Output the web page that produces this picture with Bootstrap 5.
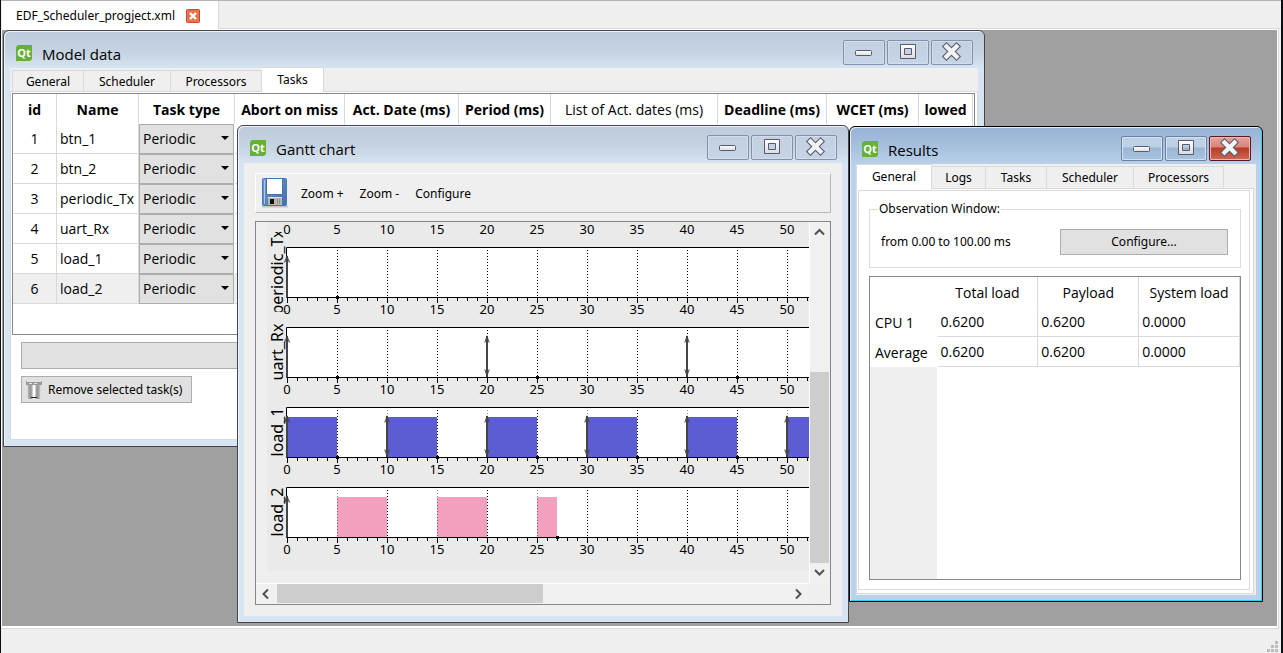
<!DOCTYPE html>
<html lang="en">
<head>
<meta charset="utf-8">
<meta name="viewport" content="width=device-width, initial-scale=1">
<title>EDF Scheduler project</title>
<link rel="stylesheet" href="https://cdn.jsdelivr.net/npm/bootstrap@5.3.0/dist/css/bootstrap.min.css">
<style>
  body { background: #0b0d14; color: #000; font: 12px/16px "Noto Sans", "Open Sans", sans-serif; }
  button, select, .btn { font: inherit; color: inherit; }
  .icon-defs { position: absolute; width: 0; height: 0; }
  .app-shell { min-height: 100vh; margin: 0 2px 0 1px; background: #efefef; }
  .doc-tabs { height: 29px; border-top: 1px solid #b4b4b4; border-bottom: 1px solid #d9d9d9; }
  .doc-tab { height: 29px; min-width: 217px; margin-left: 1px; padding: 0 18px 0 14px; background: #fff; border-right: 1px solid #d9d9d9; color: #000; }
  .doc-close { width: 14px; height: 14px; }
  .mdi-frame { margin-right: 2px; padding: 1px 1px 2px 1px; background: #fff; border-right: 1px solid #d9d9d9; border-bottom: 1px solid #d9d9d9; }
  .mdi-canvas { background: #a0a0a0; }
  .status-strip { height: 24px; }

  /* Child windows */
  .mdi-window { position: absolute; background: #d7e4f2; border: 1px solid #45464c; border-radius: 6px 6px 0 0; padding: 0 6px 6px; box-shadow: inset 1px 1px 0 #eef3f8;
    background-image: linear-gradient(#bccbdb, #c5d3e1 20px, #d7e4f2 38px); }
  .mdi-window.is-active { background: #b9d1ea linear-gradient(#98b3d2, #a5bfdc 18px, #b9d1ea 38px); border-color: #000; box-shadow: inset 1px 1px 0 #e4eef8, inset -1px -1px 0 #2fd0ea; }
  .win-model { left: 1px; top: 0; width: 982px; height: 417px; }
  .win-gantt { left: 235px; top: 95px; width: 612px; height: 498px; }
  .win-results { left: 847px; top: 96px; width: 414px; height: 476px; }
  .win-title { height: 37px; padding: 9px 5px 0 6px; }
  .win-title h2 { font-size: 15px; line-height: 20px; margin: 4px 0 0 10px; font-weight: 400; font-family: "Open Sans", "Noto Sans", sans-serif; }
  .win-title .qt { width: 16px; height: 16px; margin-top: 5px; }
  .win-controls { gap: 2px; }
  .win-ctl { width: 42px; height: 25px; padding: 0; border: 1px solid #8491ad; border-radius: 2px; background: linear-gradient(#c3d0e0, #c7d4e6); box-shadow: inset 0 0 0 1px #d3deeb; }
  .win-ctl svg { display: block; width: 40px; height: 23px; }
  .is-active .win-ctl { border-color: #6c82a4; background: linear-gradient(#bdd0e6 0 10px, #9bb5d2 11px, #a9c4e0); box-shadow: inset 0 0 0 1px #d2e1f1; }
  .is-active .win-ctl.ctl-close { border-color: #5b1620; background: linear-gradient(#e6a59d, #d98377 10px, #b93a24 11px, #cf6a55); box-shadow: inset 0 0 0 1px #eeb9b0; }
  .win-body { background: #efefef; }

  /* Tabs */
  .qt-tabs { height: 24px; }
  .qt-tabs .tab { border: 1px solid #d9d9d9; border-left: 0; background: #efefef; height: 22px; padding: 0; text-align: center; color: #000; line-height: 22px; }
  .qt-tabs .tab:first-child { border-left: 1px solid #d9d9d9; }
  .qt-tabs .tab.active { background: #fff; height: 25px; border-bottom: 0; line-height: 22px; z-index: 1; position: relative; }
  .model-tabs { padding-left: 2px; }
  .win-results .qt-tabs { height: 25px; }
  .win-results .qt-tabs .tab { height: 23px; }
  .win-results .qt-tabs .tab.active { height: 25px; }
  .qt-pane { background: #fff; border: 1px solid #d9d9d9; }

  /* Data grids */
  .grid-frame { border: 1px solid #828790; background: #fff; overflow: hidden; }
  .grid { table-layout: fixed; border-collapse: separate; border-spacing: 0; font: 14px/20px "Open Sans", "Noto Sans", sans-serif; }
  .grid th, .grid td { height: 30px; padding: 0 3px; border-right: 1px solid #d9d9d9; border-bottom: 1px solid #d9d9d9; white-space: nowrap; overflow: hidden; }
  .grid thead th { border-bottom-color: #fff; text-align: center; padding: 2px 0 0; }
  .grid .light-head { font-weight: 400; }
  .grid-tasks td.pick { padding: 0; border: 0; }
  .grid-tasks tr.current td { background: #efefef; }
  .pick-box { position: relative; width: 95px; }
  .pick-box select { appearance: none; width: 95px; height: 30px; padding: 0 3px; border: 1px solid #adadad; border-radius: 0; background: #e1e1e1; display: block; }
  .pick-box::after { content: ""; position: absolute; right: 5px; top: 12px; border: 4px solid transparent; border-top: 4px solid #000; pointer-events: none; }
  .flat-btn { background: #e1e1e1; border: 1px solid #adadad; border-radius: 0; padding: 0; line-height: 16px; }
  .model-pane { margin: -1px 0 0; padding: 1px 2px 0 1px; }
  .task-frame { height: 242px; }
  .add-btn { height: 27px; margin: 7px 0 0 9px; }
  .remove-btn { width: 171px; height: 27px; margin: 7px 0 0 9px; padding-left: 3px; gap: 5px; }

  /* Gantt window */
  .gantt-body { padding: 10px 11px 0 11px; }
  .tool-frame { height: 40px; margin-bottom: 8px; border: 1px solid #b8b8b8; border-top-color: #fff; border-left-color: #fff; padding-left: 5px; }
  .tool-frame .btn { border: 0; padding: 2px 0 0; margin-left: 16px; line-height: 16px; }
  .tool-frame .btn.zoom-in { margin-left: 12px; }
  .chart-frame { border: 1px solid #828790; height: 384px; }
  .chart-svg { display: block; width: 553px; height: 361px; overflow: visible; }
  .v-bar { width: 21px; border-left: 1px solid #fff; background: #f0f0f0; }
  .h-bar { height: 21px; border-top: 1px solid #fff; background: #f0f0f0; margin-right: 21px; }
  .bar-arrow { width: 20px; height: 20px; padding: 0; border: 0; background: none; }
  .bar-arrow svg { display: block; width: 20px; height: 20px; fill: none; stroke: #505050; stroke-width: 2; }
  .v-thumb { background: #cdcdcd; height: 191px; margin-right: 1px; }
  .h-thumb { background: #cdcdcd; width: 266px; height: 19px; margin-left: 1px; }

  /* Results window */
  .results-pane { margin: -1px 2px 1px 0; padding: 1px 3px 3px 1px; }
  .inner-pane { border: 1px solid #d9d9d9; background: #fff; padding: 9px 8px 9px 10px; }
  .obs-box { border: 1px solid #dcdcdc; height: 68px; padding: 0 12px 0 11px; }
  .obs-box legend { float: none; width: auto; font-size: 12px; line-height: 18px; margin: 0 0 0 -3px; padding: 0 1px; }
  .obs-row { padding-top: 11px; line-height: 26px; }
  .conf-btn { width: 168px; height: 26px; }
  .load-frame { margin-top: 8px; }
  .side { background: #efefef; width: 67px; }
  .grid-load tbody th { border: 0; font-weight: 400; padding: 2px 0 0 5px; background: #fff; }
  .grid-load thead th:first-child { border: 0; }
</style>
</head>
<body>
<svg class="icon-defs" aria-hidden="true">
  <defs>
    <linearGradient id="metal" x1="0" y1="0" x2="0" y2="1"><stop offset="0" stop-color="#fff"/><stop offset="1" stop-color="#dcdcdc"/></linearGradient>
    <linearGradient id="disk" x1="0" y1="0" x2="1" y2="1"><stop offset="0" stop-color="#6f9bd0"/><stop offset="1" stop-color="#3f6fae"/></linearGradient>
    <linearGradient id="bin"><stop offset="0" stop-color="#bdbdbd"/><stop offset=".25" stop-color="#8f8f8f"/><stop offset=".5" stop-color="#fff"/><stop offset=".75" stop-color="#8f8f8f"/><stop offset="1" stop-color="#c9c9c9"/></linearGradient>
  </defs>
  <symbol id="qt" viewBox="0 0 16 16"><path d="M2 0H16V14L14 16H0V2Z" fill="#65b035"/><text x="8" y="12" text-anchor="middle" font-family="Open Sans, sans-serif" font-weight="700" font-size="11" fill="#fff">Qt</text></symbol>
  <symbol id="c-min" viewBox="0 0 40 23"><rect x="11.500" y="9.500" width="16" height="5" rx="1" fill="url(#metal)" stroke="#555b70"/></symbol>
  <symbol id="c-max" viewBox="0 0 40 23"><path fill-rule="evenodd" d="M12.500 3.500h15v14h-15zM16.500 7.500v6h7v-6z" fill="url(#metal)" stroke="#555b70"/></symbol>
  <symbol id="c-close" viewBox="0 0 40 23"><path d="M14.500 5.500l10 10M24.500 5.500l-10 10" stroke="#555b70" stroke-width="6.500" stroke-linecap="square"/><path d="M14.500 5.500l10 10M24.500 5.500l-10 10" stroke="#f4f4f4" stroke-width="4.300" stroke-linecap="square"/></symbol>
</svg>

<div class="app-shell d-flex flex-column">
  <header class="doc-tabs d-flex">
    <div class="doc-tab d-flex align-items-center justify-content-between">
      <span>EDF_Scheduler_progject.xml</span>
      <button class="doc-close border-0 bg-transparent p-0 d-flex" aria-label="Close document">
        <svg width="14" height="14" viewBox="0 0 14 14"><rect x=".5" y=".5" width="13" height="13" rx="1" fill="#e2764f" stroke="#d2402c"/><path d="M4 4l6 6M10 4l-6 6" stroke="#fff" stroke-width="2.400"/></svg>
      </button>
    </div>
  </header>

  <div class="mdi-frame flex-grow-1 d-flex">
    <main class="mdi-canvas flex-grow-1 position-relative">

      <section class="mdi-window win-model d-flex flex-column">
        <div class="win-title d-flex align-items-start">
          <svg class="qt"><use href="#qt"/></svg><h2>Model data</h2>
          <div class="d-flex ms-auto win-controls" data-controls></div>
        </div>
        <div class="win-body flex-grow-1 d-flex flex-column">
          <nav class="qt-tabs model-tabs d-flex align-items-end" data-tabs="General:72,Scheduler:87,Processors:91,Tasks:62" data-active="Tasks"></nav>
          <div class="qt-pane flex-grow-1 d-flex flex-column model-pane">
            <div class="grid-frame task-frame">
              <table class="grid grid-tasks">
                <colgroup><col style="width:44px"><col style="width:82px"><col style="width:96px"><col style="width:110px"><col style="width:114px"><col style="width:92px"><col style="width:167px"><col style="width:109px"><col style="width:92px"><col style="width:54px"></colgroup>
                <thead><tr><th>id</th><th>Name</th><th>Task type</th><th>Abort on miss</th><th>Act. Date (ms)</th><th>Period (ms)</th><th class="light-head">List of Act. dates (ms)</th><th>Deadline (ms)</th><th>WCET (ms)</th><th>lowed</th></tr></thead>
                <tbody id="taskRows"></tbody>
              </table>
            </div>
            <button class="flat-btn add-btn" aria-label="Add task"></button>
            <button class="flat-btn remove-btn d-flex align-items-center">
              <svg width="18" height="20" viewBox="0 0 18 20"><path d="M2.500 3h13l-.5 16H3z" fill="url(#bin)"/><path d="M1 3h16" stroke="#9a9a9a" stroke-width="4"/><path d="M2 1.500h14M4 3.500h3M9 3.500h3" stroke="#e4e4e4"/><path d="M9 5v12" stroke="#fff" stroke-width="2"/><path d="M6 17.500h6" stroke="#222"/></svg>
              <span>Remove selected task(s)</span>
            </button>
          </div>
        </div>
      </section>

      <section class="mdi-window win-gantt d-flex flex-column">
        <div class="win-title d-flex align-items-start">
          <svg class="qt"><use href="#qt"/></svg><h2>Gantt chart</h2>
          <div class="d-flex ms-auto win-controls" data-controls></div>
        </div>
        <div class="win-body flex-grow-1 gantt-body">
          <div class="tool-frame d-flex align-items-center">
            <button class="border-0 bg-transparent p-0 d-flex" aria-label="Save chart">
              <svg width="28" height="30" viewBox="0 0 28 30"><path d="M1 28.500h26" stroke="#c4c4c4" stroke-width="2"/><rect x="1.500" y=".5" width="24" height="27" rx="1" fill="url(#disk)" stroke="#4a78b4"/><path d="M3.500 2v24" stroke="#a9c8ea"/><rect x="6" y="1" width="15" height="15" fill="#fff"/><path d="M5.500 1v15.500h16V1" fill="none" stroke="#47719f"/><rect x="7" y="19" width="14" height="8" fill="#b7b7ae"/><path d="M7 19.500h14" stroke="#e0e0d8"/><rect x="9" y="21" width="4" height="5" fill="#111"/><path d="M16.500 21v5M18.500 21v5" stroke="#93938c"/></svg>
            </button>
            <button class="btn zoom-in">Zoom +</button><button class="btn">Zoom -</button><button class="btn">Configure</button>
          </div>
          <div class="chart-frame d-flex flex-column">
            <div class="d-flex">
              <svg class="chart-svg" id="gantt" viewBox="0 0 553 361" role="img" aria-label="Task schedule"></svg>
              <div class="v-bar d-flex flex-column">
                <button class="bar-arrow" aria-label="Scroll up"><svg><path d="M5 12.500l4.500-4.500 4.500 4.500"/></svg></button>
                <div class="v-thumb mt-auto"></div>
                <button class="bar-arrow" aria-label="Scroll down"><svg><path d="M5 7l4.500 4.500 4.500-4.500"/></svg></button>
              </div>
            </div>
            <div class="h-bar d-flex">
              <button class="bar-arrow" aria-label="Scroll left"><svg><path d="M12 5.500l-4.500 4.500 4.500 4.500"/></svg></button>
              <div class="h-thumb"></div>
              <button class="bar-arrow ms-auto" aria-label="Scroll right"><svg><path d="M7 5.500l4.500 4.500-4.500 4.500"/></svg></button>
            </div>
          </div>
        </div>
      </section>

      <section class="mdi-window is-active win-results d-flex flex-column">
        <div class="win-title d-flex align-items-start">
          <svg class="qt"><use href="#qt"/></svg><h2>Results</h2>
          <div class="d-flex ms-auto win-controls" data-controls></div>
        </div>
        <div class="win-body flex-grow-1 d-flex flex-column">
          <nav class="qt-tabs d-flex align-items-end" data-tabs="General:76,Logs:54,Tasks:61,Scheduler:87,Processors:90" data-active="General"></nav>
          <div class="qt-pane flex-grow-1 d-flex flex-column results-pane">
            <div class="inner-pane flex-grow-1 d-flex flex-column">
              <fieldset class="obs-box">
                <legend>Observation Window:</legend>
                <div class="d-flex justify-content-between obs-row">
                  <span>from 0.00 to 100.00 ms</span>
                  <button class="flat-btn conf-btn">Configure...</button>
                </div>
              </fieldset>
              <div class="grid-frame flex-grow-1 d-flex flex-column load-frame">
                <table class="grid grid-load">
                  <colgroup><col style="width:67px"><col style="width:100px"><col style="width:100px"><col style="width:100px"></colgroup>
                  <thead><tr><th></th><th class="light-head">Total load</th><th class="light-head">Payload</th><th class="light-head">System load</th></tr></thead>
                  <tbody>
                    <tr><th>CPU 1</th><td>0.6200</td><td>0.6200</td><td>0.0000</td></tr>
                    <tr><th>Average</th><td>0.6200</td><td>0.6200</td><td>0.0000</td></tr>
                  </tbody>
                </table>
                <div class="side flex-grow-1"></div>
              </div>
            </div>
          </div>
        </div>
      </section>
    </main>
  </div>

  <footer class="status-strip d-flex justify-content-end align-items-end">
    <svg width="14" height="12" fill="#bdbdbd"><path d="M8 0h3v3H8zM4 4h3v3H4zM8 4h3v3H8zM0 8h3v3H0zM4 8h3v3H4zM8 8h3v3H8z"/></svg>
  </footer>
</div>

<script src="https://cdn.jsdelivr.net/npm/bootstrap@5.3.0/dist/js/bootstrap.bundle.min.js"></script>
<script>
  for (const box of document.querySelectorAll('[data-controls]')) {
    box.innerHTML = [['min', 'Minimize'], ['max', 'Maximize'], ['close', 'Close']].map(([id, label]) =>
      `<button class="win-ctl ctl-${id}" aria-label="${label}"><svg><use href="#c-${id}"/></svg></button>`).join('');
  }
  for (const nav of document.querySelectorAll('[data-tabs]')) {
    nav.innerHTML = nav.dataset.tabs.split(',').map(t => t.split(':')).map(([name, w]) =>
      `<button class="tab${name === nav.dataset.active ? ' active' : ''}" style="width:${w}px">${name}</button>`).join('');
  }
  const names = ['btn_1', 'btn_2', 'periodic_Tx', 'uart_Rx', 'load_1', 'load_2'];
  document.getElementById('taskRows').innerHTML = names.map((n, i) =>
    `<tr${i === 5 ? ' class="current"' : ''}><td class="text-center">${i + 1}</td><td>${n}</td>
     <td class="pick"><div class="pick-box"><select aria-label="Task type of ${n}"><option>Periodic</option></select></div></td>${'<td></td>'.repeat(7)}</tr>`).join('');

  // Gantt lanes: 10 px per ms, time zero at x = 31
  const lanes = [
    { name: 'periodic_Tx', arrows: [], dots: [5], runs: [] },
    { name: 'uart_Rx', arrows: [20, 40], dots: [5, 25, 45], runs: [] },
    { name: 'load_1', arrows: [10, 20, 30, 40, 50], dots: [5, 15, 25, 35, 45], runs: [[0, 5], [10, 15], [20, 25], [30, 35], [40, 45], [50, 55]], color: '#5c5cd3' },
    { name: 'load_2', arrows: [], dots: [27], runs: [[5, 10], [15, 20], [25, 27]], color: '#f2a0c0' }
  ];
  const X0 = 31, END = 553, font = 'font-family="Noto Sans, sans-serif"';
  const scale = y => { let s = ''; for (let t = 0; t <= 50; t += 5) s += `<text x="${X0 + t * 10}" y="${y}" text-anchor="middle" ${font} font-size="13">${t}</text>`; return s; };
  let out = `<rect width="${END}" height="361" fill="#efefef"/><rect x="11" width="542" height="349" fill="#eaeaea"/>` + scale(12);
  lanes.forEach((lane, i) => {
    const top = 25 + i * 80, base = top + 50;
    out += `<rect x="30" y="${top}" width="523" height="51" fill="#fff"/>`;
    lane.runs.forEach(([a, b]) => { const x = X0 + a * 10; out += `<rect x="${x}" y="${top + 10}" width="${Math.min((b - a) * 10, END - x)}" height="40" fill="${lane.color}"/>`; });
    for (let t = 5; t <= 50; t += 5) {
      const covered = lane.runs.some(([a]) => a === t);
      out += `<path d="M${X0 + t * 10}.5 ${top + 3}V${base}" stroke="#000" stroke-opacity="${covered ? .45 : 1}" stroke-dasharray="1 2"/>`;
    }
    out += `<path d="M${END} ${top}.5H30.5V${base}.5H${END}" fill="none" stroke="#000"/>`;
    for (let t = 0; t <= 52; t++) out += `<path d="M${X0 + t * 10}.5 ${base}v${t % 5 ? 4 : 6}" stroke="#000"/>`;
    out += `<path d="M${X0} ${base}V${top + 9}" stroke="#444" stroke-width="2"/><path d="M${X0} ${top + 8}l3.500 8-3.500-2-3.500 2z" fill="#444" fill-opacity=".8"/>`;
    lane.arrows.forEach(t => { const x = X0 + t * 10; out += `<path d="M${x} ${base}V${top + 9}" stroke="#444" stroke-width="2"/><path d="M${x} ${top + 8}l3 8-3-2-3 2zM${x} ${base}l3-8-3 2-3-2z" fill="#444" fill-opacity=".85"/>`; });
    lane.dots.forEach(t => out += `<rect x="${X0 + t * 10 - 1}" y="${base - 1}" width="3" height="3"/>`);
    out += scale(base + 17);
    out += `<clipPath id="lane${i}"><rect x="0" y="${top - 15}" width="40" height="80"/></clipPath><g clip-path="url(#lane${i})"><text transform="translate(27 ${top + 25}) rotate(-90)" text-anchor="middle" ${font} font-size="16">${lane.name}</text></g>`;
  });
  document.getElementById('gantt').innerHTML = out;
</script>
</body>
</html>
